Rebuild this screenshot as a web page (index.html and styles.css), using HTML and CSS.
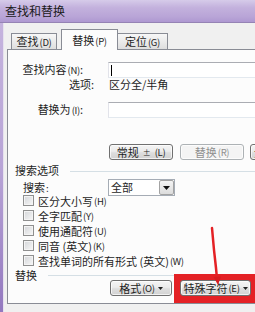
FILE: index.html
```html
<!DOCTYPE html>
<html lang="zh-CN">
<head>
<meta charset="utf-8">
<title>查找和替换</title>
<link rel="stylesheet" href="styles.css">
</head>
<body>
<div class="win">
  <div class="titlebar">查找和替换</div>
  <div class="client">
    <div class="tabs">
      <div class="tab t1">查找<span class="k">(D)</span></div>
      <div class="tab sel">替换<span class="k">(P)</span></div>
      <div class="tab t3">定位<span class="k">(G)</span></div>
    </div>
    <div class="panel">
      <div class="row r-find">
        <span class="lbl">查找内容<span class="k">(N)</span>:</span>
        <div class="field"><span class="caret"></span></div>
      </div>
      <div class="row r-opt">
        <span class="lbl lbl-o">选项:</span>
        <span class="val">区分全/半角</span>
      </div>
      <div class="row r-repl">
        <span class="lbl">替换为<span class="k">(I)</span>:</span>
        <div class="field"></div>
      </div>
      <div class="btnrow">
        <div class="btn b-less">常规 <span class="pm">±</span> <span class="k">(L)</span></div>
        <div class="btn dis b-rep">替换<span class="k">(R)</span></div>
        <div class="btn b-all">全部替换</div>
      </div>
      <div class="group g1"><span class="glbl">搜索选项</span><span class="gline"></span></div>
      <div class="row r-search">
        <span class="slbl">搜索<span class="k">:</span></span>
        <div class="select"><span class="sval">全部</span><span class="dd"><svg width="7" height="4" viewBox="0 0 7 4"><path d="M0 0h7L3.5 4z" fill="#111"/></svg></span></div>
      </div>
      <div class="checks">
        <div class="chk"><span class="box"></span>区分大小写<span class="k">(H)</span></div>
        <div class="chk"><span class="box"></span>全字匹配<span class="k">(Y)</span></div>
        <div class="chk"><span class="box"></span>使用通配符<span class="k">(U)</span></div>
        <div class="chk"><span class="box"></span>同音 (英文)<span class="k">(K)</span></div>
        <div class="chk"><span class="box"></span>查找单词的所有形式 (英文)<span class="k">(W)</span></div>
      </div>
      <div class="group g2"><span class="glbl">替换</span><span class="gline"></span></div>
      <div class="btnrow2">
        <div class="btn b-fmt">格式<span class="k">(O)</span><svg class="tri" width="5" height="3" viewBox="0 0 5 3"><path d="M0 0h5L2.5 3z" fill="#222"/></svg></div>
        <div class="mark">
          <div class="btn b-spec">特殊字符<span class="k">(E)</span><svg class="tri" width="5" height="3" viewBox="0 0 5 3"><path d="M0 0h5L2.5 3z" fill="#222"/></svg></div>
        </div>
      </div>
    </div>
  </div>
  <svg class="arrow" width="255" height="312" viewBox="0 0 255 312">
    <path d="M212 228 L214 250 L216 268 L217 279" stroke="#e42125" stroke-width="2.5" fill="none" stroke-linecap="round"/>
    <path d="M213.5 277 L221 276.5 L218 285 Z" fill="#d81c20"/>
  </svg>
</div>
</body>
</html>
```

FILE: styles.css
```css
* { box-sizing: border-box; margin: 0; padding: 0; }
html, body { width: 255px; height: 312px; overflow: hidden; }
body {
  font-family: "Noto Sans CJK SC", "Noto Sans", sans-serif;
  font-size: 11px;
  color: #1e1e1e;
  background: #f0f0f0;
}
.win {
  width: 255px;
  height: 312px;
  overflow: hidden;
  position: relative;
  display: flex;
  flex-direction: column;
  background: linear-gradient(#c7b6df, #b7a3d6 55%, #9378bf);
}
.titlebar {
  flex: none;
  height: 23px;
  padding-left: 5px;
  font-size: 12px;
  line-height: 22px;
  color: #1a1a1a;
  background: linear-gradient(#d6cbe9, #c3b1dd 35%, #b9a5d7 75%, #ae98d1);
  border-bottom: 1px solid #9583b4;
}
.client {
  flex: 1;
  width: 300px;
  margin-left: 3px;
  padding-top: 6px;
  background: #f0f0f0;
  border-left: 1px solid #e6e1ee;
}
.k { font-size: 9.5px; letter-spacing: -0.3px; margin-left: 1px; }
.tabs {
  position: relative;
  z-index: 1;
  display: flex;
  align-items: flex-end;
  height: 20px;
  padding-left: 7px;
}
.tab {
  height: 16px;
  border: 1px solid #898c95;
  border-bottom: none;
  background: linear-gradient(#f7f7f7, #ebebeb 50%, #dedede);
  text-align: center;
  line-height: 15px;
}
.t1 { width: 46px; }
.tab.sel {
  width: 57px;
  height: 21px;
  margin-left: 4px;
  margin-bottom: -1px;
  background: #fcfcfc;
  line-height: 20px;
}
.t3 { width: 51px; margin-left: -1px; }
.panel {
  margin-left: 3px;
  height: 255px;
  border: 1px solid #898c95;
  background: #fcfcfc;
  padding-top: 12px;
}
.row { display: flex; align-items: center; }
.lbl {
  flex: none;
  width: 100px;
  text-align: right;
  padding-right: 25px;
  line-height: 13px;
}
.lbl-o { padding-right: 14px; }
.r-find { height: 16px; }
.r-opt { height: 13px; line-height: 13px; }
.r-opt .val { margin-left: 1px; }
.r-repl { height: 16px; margin-top: 11px; }
.field {
  flex: 1;
  height: 16px;
  background: #fff;
  border: 1px solid #abadb3;
  border-color: #abadb3 #dbdfe6 #e3e9ef #e2e3ea;
  display: flex;
  align-items: center;
}
.caret { width: 1px; height: 11px; background: #000; margin-left: 2px; }
.btn {
  flex: none;
  height: 16px;
  border: 1px solid #707070;
  border-radius: 3px;
  background: linear-gradient(#f4f4f4, #ececec 45%, #dedede 55%, #d2d2d2);
  box-shadow: inset 0 0 0 1px rgba(255, 255, 255, 0.7);
  text-align: center;
  line-height: 13px;
  white-space: nowrap;
  display: flex;
  align-items: center;
  justify-content: center;
}
.btn.dis {
  border-color: #adb2b5;
  background: #f4f4f4;
  color: #8f8f8f;
}
.btnrow {
  display: flex;
  height: 16px;
  margin-top: 26px;
  padding-left: 101px;
}
.b-less { width: 64px; }
.pm { font-size: 8px; margin: 0 3px 0 4px; }
.b-rep { width: 64px; margin-left: 7px; }
.b-all { width: 80px; margin-left: 6px; justify-content: flex-start; padding-left: 3px; }
.group {
  display: flex;
  align-items: center;
  padding-left: 7px;
  height: 13px;
  line-height: 13px;
}
.g1 { margin-top: 4px; }
.g2 { height: 14px; }
.gline { flex: 1; height: 1px; background: #d5dfe5; margin-left: 11px; margin-top: 1px; }
.r-search { height: 17px; margin-top: 2px; }
.slbl { flex: none; width: 100px; padding-left: 15px; line-height: 12px; }
.select {
  width: 67px;
  height: 17px;
  background: #fff;
  border: 1px solid #a5acb5;
  display: flex;
}
.sval { flex: 1; padding-left: 2px; line-height: 15px; }
.dd {
  width: 15px;
  border: 1px solid #a3a3a3;
  border-radius: 2px;
  background: linear-gradient(#f4f4f4, #dcdcdc);
  display: flex;
  align-items: center;
  justify-content: center;
}
.checks { margin-top: -3px; }
.chk {
  height: 15px;
  line-height: 12px;
  display: flex;
  align-items: center;
  padding-left: 15px;
  white-space: nowrap;
}
.box {
  flex: none;
  width: 11px;
  height: 11px;
  margin-right: 4px;
  border: 1px solid #8f8f8f;
  background: linear-gradient(135deg, #d4d6d9, #f7f7f7);
  box-shadow: inset 0 0 0 1px #f4f4f4;
}
.btnrow2 {
  display: flex;
  align-items: flex-start;
  margin-top: -2px;
  padding-left: 102px;
}
.b-fmt { width: 62px; }
.tri { margin-left: 3px; }
.mark {
  flex: none;
  margin-left: 2px;
  margin-top: -6px;
  border: 6px solid #e42125;
  border-bottom-width: 7px;
  background: #e42125;
}
.b-spec { width: 71px; }
.arrow { position: absolute; left: 0; top: 0; pointer-events: none; }
```
